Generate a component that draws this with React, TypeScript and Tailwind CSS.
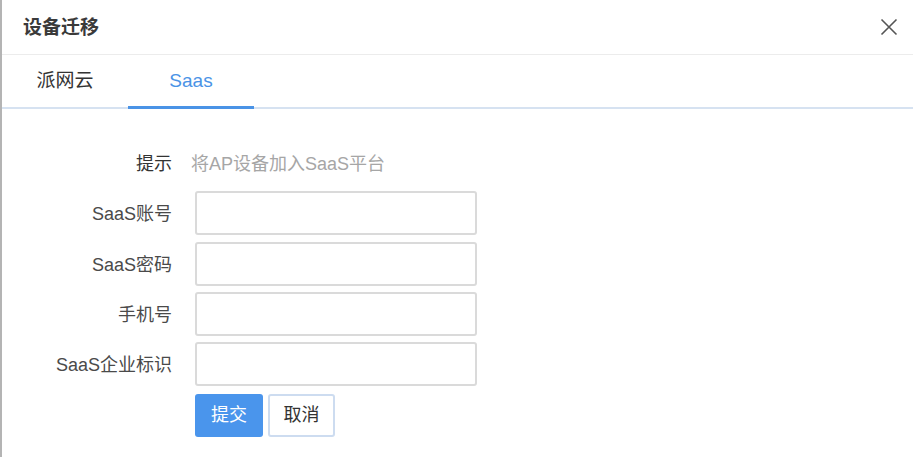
import React from "react";

const fields = ["SaaS账号", "SaaS密码", "手机号", "SaaS企业标识"];

export default function App() {
  return (
    <div className="w-[913px] h-[457px] bg-white border-l-2 border-[#b4b4b4] overflow-hidden font-['Liberation_Sans','Noto_Sans_CJK_SC',sans-serif] text-[#333]">
      <div className="h-[55px] flex items-center justify-between pl-[21px] pr-[15px] border-b border-[#ececec]">
        <div className="text-[19px] font-semibold text-[#3a3a3a] leading-none">设备迁移</div>
        <svg width="18" height="18" viewBox="0 0 18 18" className="text-[#555]">
          <path d="M1.5 1.5 L16.5 16.5 M16.5 1.5 L1.5 16.5" stroke="currentColor" strokeWidth="1.6" fill="none" />
        </svg>
      </div>
      <div className="h-[54px] flex border-b-2 border-[#d6e2f1]">
        <div className="w-[126px] flex items-center justify-center text-[19px] text-[#333]">派网云</div>
        <div className="w-[126px] flex items-center justify-center text-[19px] text-[#4a93e6] relative">
          Saas
          <div className="absolute left-0 right-0 bottom-[-2px] h-[3px] bg-[#4a93e6]" />
        </div>
      </div>
      <div className="pt-[32px] flex flex-col gap-[6.33px]">
        <div className="flex items-center h-[44px]">
          <div className="w-[170px] text-right text-[18px] text-[#333] pt-[2px]">提示</div>
          <div className="ml-[19px] text-[18px] text-[#a6a6a6] pt-[2px]">将AP设备加入SaaS平台</div>
        </div>
        {fields.map((f) => (
          <div key={f} className="flex items-center h-[44px]">
            <div className="w-[170px] text-right text-[18px] text-[#4a4a4a] pt-[3px]">{f}</div>
            <input className="ml-[23px] w-[282px] h-[44px] border-2 border-[#dadada] rounded-[3px] outline-none" />
          </div>
        ))}
        <div className="flex pl-[193px] gap-[5px] mt-[1px]">
          <button className="w-[68px] h-[43px] rounded-[3px] bg-[#4a95ec] text-white text-[18px]">提交</button>
          <button className="w-[67px] h-[43px] rounded-[3px] bg-white border-2 border-[#cddcf0] text-[#333] text-[18px]">取消</button>
        </div>
      </div>
    </div>
  );
}
